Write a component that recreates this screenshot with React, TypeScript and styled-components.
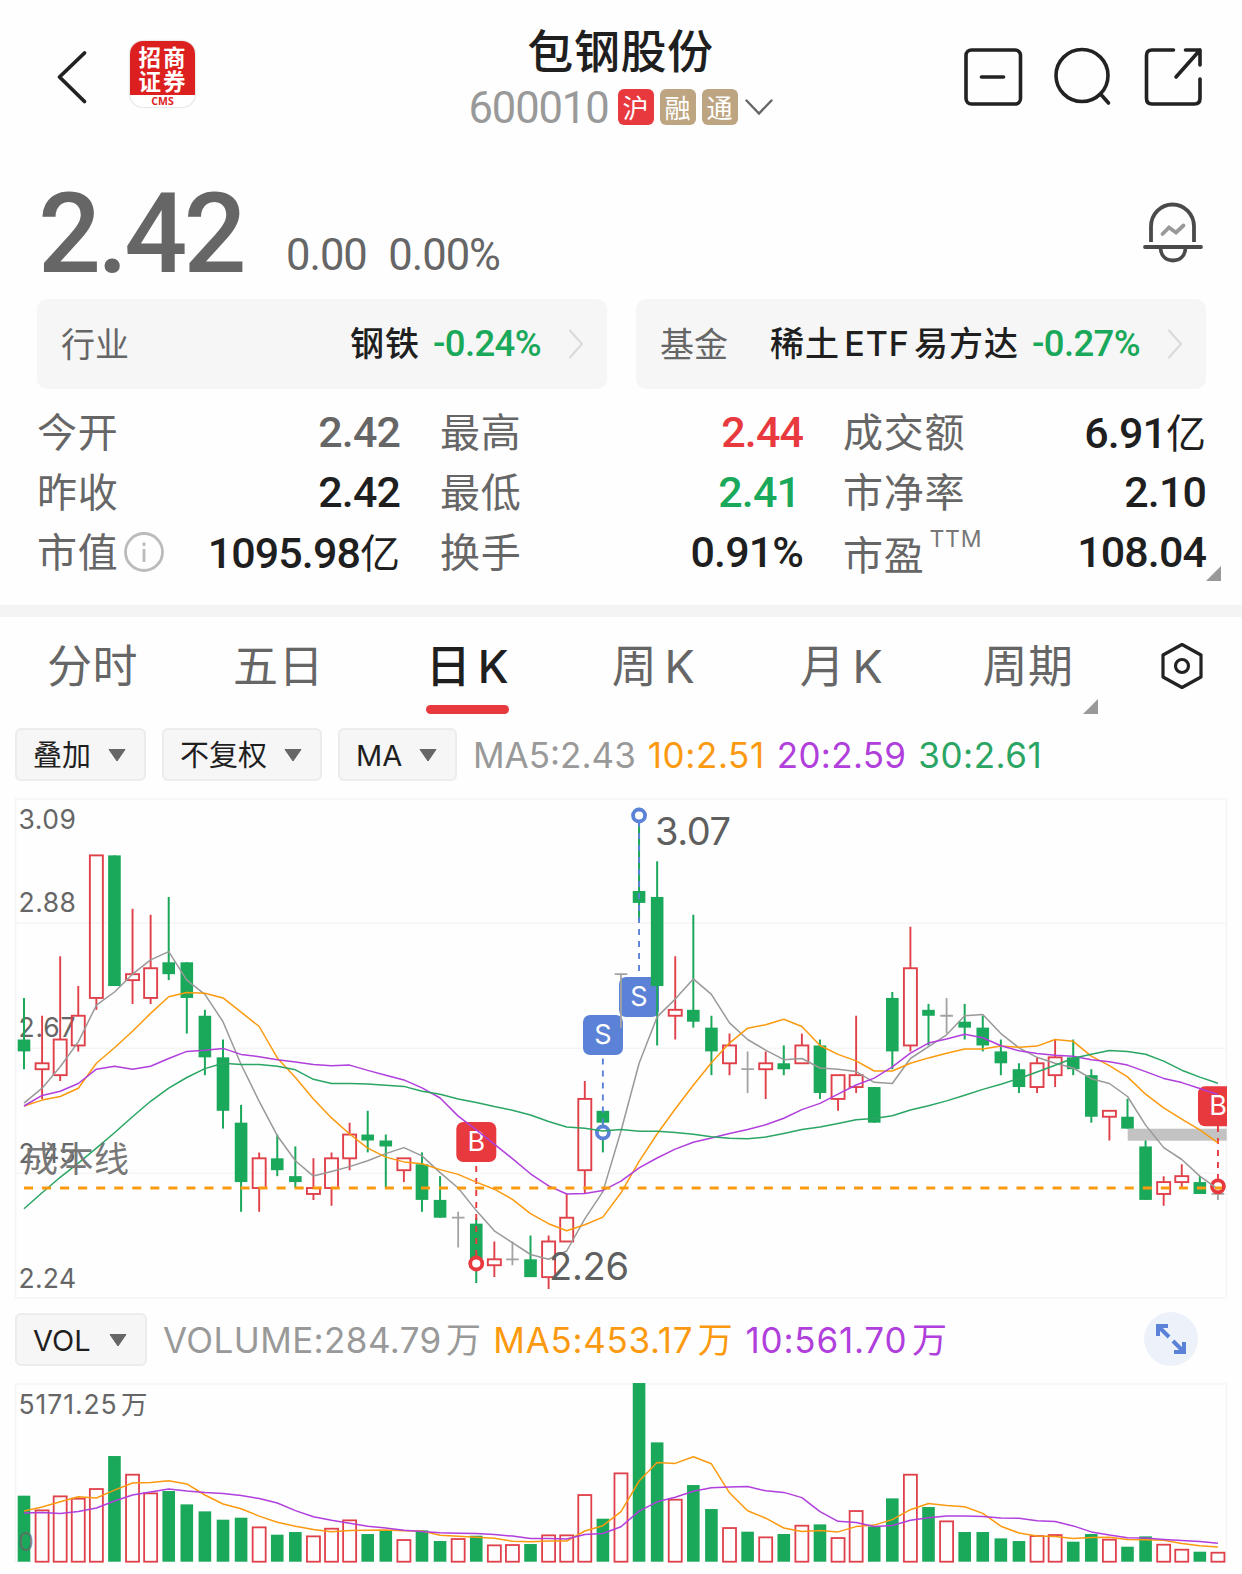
import React from "react";
import styled, { createGlobalStyle } from "styled-components";

const RED = "#e8393f";
const GREEN = "#1aa85a";
const GREY = "#999999";
const ORANGE = "#fb9a0f";
const PURPLE = "#b03fdc";
const BLUE = "#5b82d6";
const CJK = `"Noto Sans CJK SC", sans-serif`;
const NUM = `Roboto, ${CJK}`;
const UI = `Inter, ${CJK}`;

const GlobalStyle = createGlobalStyle`
  * { box-sizing: border-box; }
  body { margin: 0; background: #fefefe; }
  svg { display: block; flex: none; }
`;

const Page = styled.main`
  width: 1242px;
  height: 1574px;
  overflow: hidden;
  display: flex;
  flex-direction: column;
  background: #fefefe;
  color: #1f1f1f;
  font-family: ${UI};
`;

const Header = styled.header`
  display: grid;
  grid-template-columns: 420px 402px 420px;
  height: 170px;
`;
const HeaderLeft = styled.div`
  display: flex;
  align-items: flex-start;
  gap: 40px;
  padding: 41px 0 0 54px;
`;
const HeaderCenter = styled.div`
  display: flex;
  flex-direction: column;
  align-items: center;
`;
const HeaderRight = styled.div`
  display: flex;
  justify-content: flex-end;
  gap: 28px;
  padding: 46px 37px 0 0;
`;
const Logo = styled.div`
  width: 65px;
  height: 66px;
  border-radius: 13px;
  overflow: hidden;
  background: #fff;
  box-shadow: 0 0 2px rgba(0, 0, 0, 0.3);
  text-align: center;
`;
const LogoMark = styled.div`
  height: 54px;
  padding: 3px 0 0 1px;
  background: #dc1f1f;
  color: #fff;
  font: 700 22.5px/24px ${CJK};
  letter-spacing: 2px;
`;
const LogoName = styled.div`
  color: #d22;
  font: 700 10.5px/12px "Open Sans", sans-serif;
`;
const Title = styled.h1`
  margin: 15px 0 0 -1px;
  font: 500 46px/66px ${CJK};
  letter-spacing: 0.6px;
  white-space: nowrap;
`;
const CodeRow = styled.div`
  display: flex;
  align-items: center;
  gap: 6px;
  height: 46px;
  margin-top: 3px;
`;
const Code = styled.span`
  color: ${GREY};
  font: 400 43.5px/46px ${NUM};
  letter-spacing: -1.1px;
  margin-right: 3px;
  padding-top: 3px;
`;
const Tag = styled.span<{ $bg: string }>`
  width: 36px;
  height: 36px;
  border-radius: 6px;
  background: ${(p) => p.$bg};
  color: #fff;
  text-align: center;
  font: 400 26px/35px ${CJK};
`;

const Quote = styled.section`
  display: flex;
  align-items: flex-start;
  height: 129px;
  padding: 0 39px 0 38px;
  color: #666;
  font-family: ${NUM};
`;
const Price = styled.span`
  width: 248px;
  padding-top: 4px;
  font-size: 111px;
  font-weight: 500;
  line-height: 120px;
  letter-spacing: -3.8px;
`;
const Change = styled.span`
  font-size: 43.5px;
  line-height: 50px;
  letter-spacing: -1px;
  padding-top: 61px;
  margin-right: 21.5px;
`;
const BellSlot = styled.div`
  margin-left: auto;
  padding-top: 31px;
`;

const Cards = styled.section`
  display: grid;
  grid-template-columns: 1fr 1fr;
  gap: 29px;
  padding: 0 36px 0 37px;
`;
const Card = styled.div`
  display: flex;
  align-items: center;
  height: 90px;
  border-radius: 10px;
  background: #f6f6f6;
  padding: 0 23px 0 24px;
`;
const CardLabel = styled.span`
  flex: 1;
  color: #666;
  font: 400 34px/48px ${CJK};
  padding-bottom: 2px;
`;
const CardName = styled.span`
  font: 500 34px/50px ${UI};
  letter-spacing: 1px;
  word-spacing: -6px;
  margin-right: 13px;
`;
const CardPct = styled.span`
  color: ${GREEN};
  font: 500 36.5px/50px ${NUM};
  letter-spacing: -0.6px;
  margin-right: 27px;
`;

const Stats = styled.section`
  display: grid;
  grid-template-columns: repeat(3, 1fr);
  grid-auto-rows: 60px;
  column-gap: 40px;
  height: 216px;
  padding: 13px 36px 0 37px;
`;
const Stat = styled.div`
  position: relative;
  display: flex;
  align-items: center;
`;
const StatLabel = styled.span<{ $drop?: number }>`
  color: #666;
  font: 400 40px/56px ${CJK};
  letter-spacing: 0.7px;
  padding-top: ${(p) => p.$drop ?? 0}px;
  padding-bottom: 4px;
`;
const Sup = styled.span`
  align-self: flex-start;
  color: #777;
  font: 400 23px/28px ${UI};
  letter-spacing: 0.8px;
  margin: 3px 0 0 5px;
`;
const StatValue = styled.span<{ $c?: string; $ls?: number }>`
  margin-left: auto;
  margin-right: ${(p) => p.$ls ?? 0}px;
  padding-top: 1px;
  color: ${(p) => p.$c || "#1f1f1f"};
  font: 500 43px/59px ${NUM};
  letter-spacing: -0.9px;
  white-space: nowrap;
`;
const Unit = styled.span`
  font: 400 40px/56px ${CJK};
  letter-spacing: 0;
`;
const Corner = styled.i<{ $right: number; $bottom: number }>`
  position: absolute;
  right: ${(p) => p.$right}px;
  bottom: ${(p) => p.$bottom}px;
  width: 15px;
  height: 15px;
  background: ${GREY};
  clip-path: polygon(100% 0, 100% 100%, 0 100%);
`;
const Divider = styled.div`
  height: 12px;
  background: #f4f4f4;
`;

const Tabs = styled.nav`
  display: grid;
  grid-template-columns: repeat(6, 187px) 120px;
  height: 110px;
`;
const Tab = styled.div<{ $on?: boolean }>`
  position: relative;
  display: flex;
  flex-direction: column;
  align-items: center;
  color: ${(p) => (p.$on ? "#1f1f1f" : "#666")};
  font: ${(p) => (p.$on ? 500 : 400)} 45px/66px ${UI};
  padding-top: 17px;
  &::after {
    content: "";
    width: 83px;
    height: 9px;
    margin-top: 5px;
    border-radius: 5px;
    background: ${(p) => (p.$on ? RED : "transparent")};
  }
`;
const TabText = styled.span<{ $shift?: number }>`
  letter-spacing: 0.6px;
  word-spacing: -6px;
  margin-left: ${(p) => p.$shift ?? 0}px;
`;
const TabIcon = styled.div`
  display: flex;
  justify-content: center;
  padding-top: 25px;
`;

const Toolbar = styled.div<{ $gap: number }>`
  display: flex;
  align-items: center;
  height: 54px;
  padding: 0 44px 0 15px;
  gap: ${(p) => p.$gap}px;
`;
const Pill = styled.button<{ $w: number }>`
  display: flex;
  align-items: center;
  justify-content: space-between;
  width: ${(p) => p.$w}px;
  height: 53px;
  padding: 2px 18px 0 16px;
  border: 2px solid #ececec;
  border-radius: 6px;
  background: #f6f6f6;
  color: #1f1f1f;
  font: 400 29px/47px ${UI};
`;
const Legend = styled.div<{ $ws?: number }>`
  display: flex;
  gap: 12px;
  padding-top: 2px;
  font: 400 35px/52px ${UI};
  word-spacing: ${(p) => p.$ws ?? 0}px;
  white-space: nowrap;
`;
const LegendItem = styled.span<{ $c: string; $ls?: number }>`
  color: ${(p) => p.$c};
  letter-spacing: ${(p) => p.$ls ?? 0}px;
`;
const Expand = styled.div`
  display: flex;
  align-items: center;
  justify-content: center;
  width: 54px;
  height: 54px;
  margin-left: auto;
  border-radius: 50%;
  background: #edf1fa;
`;
const Spacer = styled.div<{ $h: number }>`
  flex: none;
  height: ${(p) => p.$h}px;
`;

type Kind = "g" | "r" | "n";
type Candle = [Kind, number, number, number, number];

/* kind, high, body top, body bottom, low: cents above 2.26 */
const candles: Candle[] = [
  ["g", 49, 42, 40, 37], ["r", 46, 38, 37, 32], ["r", 56, 42, 36, 35], ["r", 51, 46, 41, 40],
  ["r", 73, 73, 49, 47], ["g", 73, 73, 51, 51], ["r", 64, 53, 52, 48], ["r", 63, 54, 49, 48],
  ["g", 66, 55, 53, 52], ["g", 55, 55, 49, 43], ["g", 47, 46, 39, 36], ["g", 42, 39, 30, 27],
  ["g", 31, 28, 18, 13], ["r", 23, 22, 17, 13], ["g", 26, 22, 20, 19], ["g", 24, 19, 18, 17],
  ["r", 22, 17, 16, 15], ["r", 23, 22, 17, 14], ["r", 28, 26, 22, 20], ["g", 30, 26, 25, 23],
  ["g", 26, 25, 24, 17], ["r", 22, 22, 20, 18], ["g", 23, 21, 15, 13], ["g", 19, 15, 12, 12],
  ["n", 13, 12, 12, 7], ["g", 12, 11, 5, 1], ["r", 8, 5, 4, 2], ["n", 8, 5, 5, 4],
  ["g", 9, 5, 2, 2], ["r", 9, 8, 2, 0], ["r", 16, 12, 8, 8], ["r", 35, 32, 20, 16],
  ["g", 30, 30, 28, 23], ["n", 53, 53, 53, 44], ["g", 81, 67, 65, 62], ["g", 72, 66, 51, 41],
  ["r", 56, 47, 46, 42], ["g", 63, 47, 45, 44], ["g", 46, 44, 40, 36], ["r", 43, 41, 38, 36],
  ["n", 40, 37, 37, 33], ["r", 40, 38, 37, 32], ["g", 41, 38, 37, 36], ["r", 43, 41, 38, 38],
  ["g", 42, 41, 33, 32], ["r", 36, 36, 32, 30], ["r", 46, 36, 34, 33], ["g", 34, 34, 28, 28],
  ["g", 50, 49, 40, 37], ["r", 61, 54, 41, 40], ["g", 48, 47, 46, 41], ["n", 49, 46, 46, 43],
  ["g", 48, 45, 44, 42], ["g", 46, 44, 41, 40], ["g", 42, 40, 38, 36], ["g", 38, 37, 34, 33],
  ["r", 39, 38, 34, 33], ["r", 42, 39, 36, 34], ["g", 42, 39, 37, 36], ["g", 37, 36, 29, 28],
  ["r", 30, 30, 29, 25], ["g", 32, 29, 27, 27], ["g", 25, 24, 15, 15], ["r", 19, 18, 16, 14],
  ["r", 21, 19, 18, 17], ["g", 19, 18, 16, 16], ["n", 18, 16, 16, 15],
];

const volumes = [
  198, 154, 196, 189, 218, 317, 261, 205, 212, 172, 151, 126, 132, 103, 81, 89, 76, 99, 124, 83, 94, 65,
  94, 62, 68, 78, 49, 50, 53, 79, 79, 200, 129, 265, 536, 358, 186, 230, 158, 101, 90, 73, 83, 108, 112,
  71, 152, 106, 190, 261, 164, 121, 89, 89, 70, 62, 77, 80, 60, 83, 66, 45, 76, 51, 36, 30, 27,
];

const seeds = {
  p5: [31.3, 33.8, 37.4, 41.6],
  p10: [30.8, 31.8, 32.4, 33.8, 38, 40.6, 43.4, 46.4, 49.2],
  p20: [30.8, 32.6, 33.3, 34.6, 37, 37.5, 37, 37.5, 38.8, 40, 40.2, 40.5, 39.5, 39.1, 38.6, 38.2, 37.8, 37.6, 37.7],
  p30: [
    13.5, 16.2, 18.8, 21.2, 23.7, 26.3, 29, 31.6, 33.8, 35.6, 37.1, 38, 37.8, 37.8, 37.5, 36.9, 35.3, 34.6,
    34.6, 34.5, 34.3, 34.1, 33.3, 32.8, 32, 31.4, 30.7, 30.1, 29.3,
  ],
  v5: [152, 164, 180, 195],
  v10: [146, 148, 145, 151, 161, 182, 200, 209, 218],
};

const X0 = 24;
const STEP = 18.09;
const xAt = (i: number) => X0 + i * STEP;
const priceY = (t: number) => 495 - t * 5.94;
const VOL_BASE = 181.7;
const volY = (v: number) => VOL_BASE - v / 3;
const closes = candles.map(([k, , top, bottom]) => (k === "g" ? bottom : top));

function average(data: number[], n: number, seed: number[]) {
  return data.map((_, i) =>
    i < seed.length ? seed[i] : data.slice(i - n + 1, i + 1).reduce((a, b) => a + b, 0) / n
  );
}

function Line({ data, y, color }: { data: number[]; y: (v: number) => number; color: string }) {
  const points = data.map((v, i) => `${xAt(i).toFixed(1)},${y(v).toFixed(1)}`).join(" ");
  return <polyline points={points} fill="none" stroke={color} strokeWidth={1.5} strokeLinejoin="round" />;
}

function CandleShape({ c, i }: { c: Candle; i: number }) {
  const [kind, high, top, bottom, low] = c;
  const x = xAt(i);
  const yt = priceY(top);
  const yb = priceY(bottom);
  if (kind === "g")
    return (
      <g fill={GREEN}>
        <rect x={x - 1} y={priceY(high)} width={2} height={priceY(low) - priceY(high)} />
        <rect x={x - 6.3} y={yt} width={12.6} height={yb - yt} />
      </g>
    );
  if (kind === "n")
    return <path d={`M${x} ${priceY(high)}V${priceY(low)}M${x - 6.3} ${yt}h12.6`} stroke="#a3a3a3" strokeWidth={1.8} />;
  return (
    <g fill="none" stroke="#e0404a" strokeWidth={1.9}>
      <path d={`M${x} ${priceY(high)}V${yt}M${x} ${yb}V${priceY(low)}`} />
      <rect x={x - 6.5} y={yt} width={13} height={yb - yt} />
    </g>
  );
}

function Badge({ x, y, color, label }: { x: number; y: number; color: string; label: string }) {
  return (
    <g>
      <rect x={x - 20} y={y} width={40} height={40} rx={7} fill={color} />
      <text x={x} y={y + 28.5} fontSize={27} fill="#fff" textAnchor="middle" fontFamily="Inter, sans-serif">
        {label}
      </text>
    </g>
  );
}

function Stem({ x, from, to, ring, color }: { x: number; from: number; to: number; ring: number; color: string }) {
  return (
    <g stroke={color} fill="none">
      <path d={`M${x} ${from}V${to}`} strokeWidth={1.9} strokeDasharray="6 6" />
      <circle cx={x} cy={ring} r={6} strokeWidth={3.8} fill="#fff" />
    </g>
  );
}

function PriceChart() {
  return (
    <svg width="1242" height="510" viewBox="0 0 1242 510">
      <g stroke="#f5f5f5" strokeWidth={1.6} fill="none">
        <rect x={15.5} y={5} width={1211} height={499} />
        <path d="M15 129H1226M15 254.3H1226M15 379.3H1226" />
      </g>
      <g fontSize={26.5} fill="#666" fontFamily="Inter, sans-serif">
        <text x={18.5} y={35} textLength={57.5}>3.09</text>
        <text x={18.5} y={118} textLength={57.5}>2.88</text>
        <text x={18.5} y={243} textLength={57}>2.67</text>
        <text x={18.5} y={369} textLength={57}>2.45</text>
        <text x={18.5} y={494} textLength={57.5}>2.24</text>
      </g>
      <rect x={1127.7} y={334.7} width={99} height={12} fill="#c3c3c3" />
      <Badge x={476.3} y={328} color={RED} label="B" />
      <Badge x={603} y={221} color={BLUE} label="S" />
      <Badge x={639} y={183} color={BLUE} label="S" />
      <svg x="0" y="0" width="1227" height="510">
        <Badge x={1218} y={292.3} color={RED} label="B" />
      </svg>
      {candles.map((c, i) => (
        <CandleShape key={i} c={c} i={i} />
      ))}
      <Stem x={xAt(25)} from={372} to={466} ring={469.5} color={RED} />
      <Stem x={xAt(32)} from={264.5} to={334} ring={338.5} color={BLUE} />
      <Stem x={xAt(34)} from={27} to={180} ring={21.5} color={BLUE} />
      <Stem x={xAt(66)} from={332} to={388} ring={392.3} color={RED} />
      <Line data={average(closes, 5, seeds.p5)} y={priceY} color={GREY} />
      <Line data={average(closes, 10, seeds.p10)} y={priceY} color={ORANGE} />
      <Line data={average(closes, 20, seeds.p20)} y={priceY} color={PURPLE} />
      <Line data={average(closes, 30, seeds.p30)} y={priceY} color="#2aa563" />
      <path d="M24 394H1222" stroke={ORANGE} strokeWidth={3.2} strokeDasharray="9 9.045" />
      <g fill="#5f5f5f" fontFamily="Inter, sans-serif" fontSize={38}>
        <text x={655} y={51} textLength={76}>3.07</text>
        <text x={549} y={486} textLength={80}>2.26</text>
      </g>
      <text x={23} y={378} fontSize={35} fill="#777" textLength={106} fontFamily='"Noto Sans CJK SC", sans-serif'>
        成本线
      </text>
    </svg>
  );
}

const upVolume = new Set([24, 27, 33, 51, 66]);

function VolumeChart() {
  return (
    <svg width="1242" height="194" viewBox="0 0 1242 194">
      <path d="M15.5 182V4H1226.5V182" fill="none" stroke="#f5f5f5" strokeWidth={1.6} />
      <text x={18.5} y={34} fontSize={26.5} fill="#666" textLength={129} wordSpacing={-5} fontFamily='Inter, "Noto Sans CJK SC", sans-serif'>
        5171.25 万
      </text>
      {volumes.map((v, i) => {
        const x = xAt(i);
        const up = candles[i][0] === "r" || upVolume.has(i);
        return up ? (
          <rect key={i} x={x - 6.5} y={volY(v)} width={13} height={v / 3} fill="#fefefe" stroke="#e0404a" strokeWidth={1.8} />
        ) : (
          <rect key={i} x={x - 6.3} y={volY(v)} width={12.6} height={v / 3} fill={GREEN} />
        );
      })}
      <text x={18} y={171} fontSize={25} fill="#666" fillOpacity={0.8} fontFamily="Inter, sans-serif">0</text>
      <Line data={average(volumes, 5, seeds.v5)} y={volY} color={ORANGE} />
      <Line data={average(volumes, 10, seeds.v10)} y={volY} color={PURPLE} />
    </svg>
  );
}

const Caret = () => (
  <svg width="18" height="14" viewBox="0 0 18 14">
    <path d="M1 1.5H17L9 13Z" fill="#666" stroke="#666" strokeLinejoin="round" />
  </svg>
);
const CardArrow = () => (
  <svg width="16" height="32" viewBox="0 0 16 32" fill="none" stroke="#d9d9d9" strokeWidth="2">
    <path d="M1.5 2 14 16 1.5 30" />
  </svg>
);

export default function App() {
  return (
    <>
      <GlobalStyle />
      <Page>
        <Header>
          <HeaderLeft>
            <svg width="36" height="70" viewBox="0 0 36 70" fill="none" stroke="#222" strokeWidth="3.8" strokeLinecap="round" strokeLinejoin="round">
              <path d="M30.5 12 5.500 36 30.500 60.500" />
            </svg>
            <Logo>
              <LogoMark>招商<br />证券</LogoMark>
              <LogoName>CMS</LogoName>
            </Logo>
          </HeaderLeft>
          <HeaderCenter>
            <Title>包钢股份</Title>
            <CodeRow>
              <Code>600010</Code>
              <Tag $bg={RED}>沪</Tag>
              <Tag $bg="#bea582">融</Tag>
              <Tag $bg="#bea582">通</Tag>
              <svg width="30" height="20" viewBox="0 0 30 20" fill="none" stroke="#666" strokeWidth="2.4" strokeLinecap="round">
                <path d="M2.500 3.500 15 16.500 27.500 3.500" />
              </svg>
            </CodeRow>
          </HeaderCenter>
          <HeaderRight>
            <svg width="62" height="62" viewBox="0 0 62 62" fill="none" stroke="#222" strokeWidth="3.6" strokeLinecap="round">
              <rect x="3" y="4" width="54.500" height="54" rx="5.5" />
              <path d="M18.500 31H40.500" />
            </svg>
            <svg width="62" height="62" viewBox="0 0 62 62" fill="none" stroke="#222" strokeWidth="3.6" strokeLinecap="round">
              <circle cx="29" cy="29.500" r="26" />
              <path d="M47.500 48 55.500 57" />
            </svg>
            <svg width="62" height="62" viewBox="0 0 62 62" fill="none" stroke="#222" strokeWidth="3.6" strokeLinecap="round" strokeLinejoin="round">
              <path d="M30.5 4H9Q3.500 4 3.500 9.500V52.500Q3.500 58 9 58H51.500Q57 58 57 52.500V33" />
              <path d="M42.500 4H57V19M57 4 33 31" />
            </svg>
          </HeaderRight>
        </Header>

        <Quote>
          <Price>2.42</Price>
          <Change>0.00</Change>
          <Change>0.00%</Change>
          <BellSlot>
            <svg width="60" height="64" viewBox="0 0 60 64" fill="none" stroke="#4a4a4a" strokeWidth="3.8" strokeLinecap="round">
              <path d="M8 41V25.500A21.500 22 0 0 1 51 25.500V41" strokeLinecap="butt" />
              <path d="M2 46H58M17.500 47C18 55 23 59.500 30 59.500S42 55 42.500 47" />
              <path d="M19.500 33 26 26.500 33 31.500 40.500 24.500" stroke="#999" />
            </svg>
          </BellSlot>
        </Quote>

        <Cards>
          <Card>
            <CardLabel>行业</CardLabel>
            <CardName>钢铁</CardName>
            <CardPct>-0.24%</CardPct>
            <CardArrow />
          </Card>
          <Card>
            <CardLabel>基金</CardLabel>
            <CardName>稀土 ETF 易方达</CardName>
            <CardPct>-0.27%</CardPct>
            <CardArrow />
          </Card>
        </Cards>

        <Stats>
          <Stat><StatLabel>今开</StatLabel><StatValue $c="#666">2.42</StatValue></Stat>
          <Stat><StatLabel>最高</StatLabel><StatValue $c={RED}>2.44</StatValue></Stat>
          <Stat><StatLabel>成交额</StatLabel><StatValue>6.91<Unit>亿</Unit></StatValue></Stat>
          <Stat><StatLabel>昨收</StatLabel><StatValue>2.42</StatValue></Stat>
          <Stat><StatLabel>最低</StatLabel><StatValue $c={GREEN} $ls={3}>2.41</StatValue></Stat>
          <Stat><StatLabel>市净率</StatLabel><StatValue>2.10</StatValue></Stat>
          <Stat>
            <StatLabel>市值</StatLabel>
            <svg width="52" height="42" viewBox="0 0 52 42" fill="none" stroke="#bbb" strokeWidth="2.8">
              <circle cx="26" cy="21" r="18.500" />
              <path d="M26 18V31M26 11.500V15" />
            </svg>
            <StatValue>1095.98<Unit>亿</Unit></StatValue>
          </Stat>
          <Stat><StatLabel>换手</StatLabel><StatValue>0.91%</StatValue></Stat>
          <Stat>
            <StatLabel $drop={6}>市盈</StatLabel>
            <Sup>TTM</Sup>
            <StatValue>108.04</StatValue>
            <Corner $right={-15} $bottom={1} />
          </Stat>
        </Stats>
        <Divider />

        <Tabs>
          <Tab><TabText $shift={-2}>分时</TabText></Tab>
          <Tab><TabText $shift={-4}>五日</TabText></Tab>
          <Tab $on><TabText>日 K</TabText></Tab>
          <Tab><TabText $shift={-2}>周 K</TabText></Tab>
          <Tab><TabText>月 K</TabText></Tab>
          <Tab><TabText $shift={-1}>周期</TabText><Corner $right={24} $bottom={13} /></Tab>
          <TabIcon>
            <svg width="44" height="48" viewBox="0 0 44 48" fill="none" stroke="#222" strokeWidth="3.2" strokeLinejoin="round">
              <path d="M22 2.500 41 13V35L22 45.500 3 35V13Z" />
              <circle cx="22" cy="24" r="6.500" />
            </svg>
          </TabIcon>
        </Tabs>

        <Toolbar $gap={16}>
          <Pill $w={131}>叠加<Caret /></Pill>
          <Pill $w={160}>不复权<Caret /></Pill>
          <Pill $w={119}>MA<Caret /></Pill>
          <Legend>
            <LegendItem $c={GREY}>MA5:2.43</LegendItem>
            <LegendItem $c={ORANGE} $ls={0.6}>10:2.51</LegendItem>
            <LegendItem $c={PURPLE} $ls={0.3}>20:2.59</LegendItem>
            <LegendItem $c="#2aa563" $ls={0.5}>30:2.61</LegendItem>
          </Legend>
        </Toolbar>

        <Spacer $h={13} />
        <PriceChart />
        <Spacer $h={8} />

        <Toolbar $gap={16}>
          <Pill $w={132}>VOL<Caret /></Pill>
          <Legend $ws={-6}>
            <LegendItem $c={GREY} $ls={0.4}>VOLUME:284.79 万</LegendItem>
            <LegendItem $c={ORANGE} $ls={0.7}>MA5:453.17 万</LegendItem>
            <LegendItem $c={PURPLE} $ls={0.8}>10:561.70 万</LegendItem>
          </Legend>
          <Expand>
            <svg width="34" height="34" viewBox="0 0 34 34" fill="none" stroke={BLUE} strokeWidth="4">
              <path d="M4 14V4H14M5 5 15 15M30 20V30H20M29 29 19 19" />
            </svg>
          </Expand>
        </Toolbar>
        <Spacer $h={14} />
        <VolumeChart />
      </Page>
    </>
  );
}
